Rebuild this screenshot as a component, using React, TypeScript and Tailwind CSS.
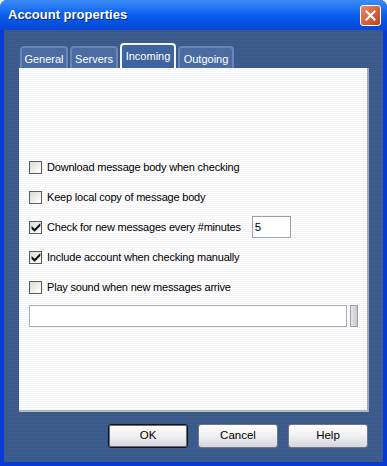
import React, { useState } from 'react';

const rows = [
  { label: 'Download message body when checking', checked: false },
  { label: 'Keep local copy of message body', checked: false },
  { label: 'Check for new messages every #minutes', checked: true, minutes: true },
  { label: 'Include account when checking manually', checked: true },
  { label: 'Play sound when new messages arrive', checked: false },
];

const tabs = [
  { name: 'General', w: 'w-[48px]' },
  { name: 'Servers', w: 'w-[48px]' },
  { name: 'Incoming', w: 'w-[56px]' },
  { name: 'Outgoing', w: 'w-[56px]' },
];

function CheckBox({ checked, onClick }: { checked: boolean; onClick: () => void }) {
  return (
    <button
      onClick={onClick}
      className="w-[13px] h-[13px] shrink-0 border border-[#5a5a5a] bg-gradient-to-br from-[#dcdcd7] to-[#ffffff] flex items-center justify-center p-0"
    >
      {checked && (
        <svg width="10" height="10" viewBox="0 0 9 9">
          <path d="M0.5 3.6 L3.3 6.1 L8.4 0.8 L8.4 3.6 L3.3 8.8 L0.5 6.3 Z" fill="#111" />
        </svg>
      )}
    </button>
  );
}

export default function App() {
  const [checks, setChecks] = useState(rows.map((r) => r.checked));
  const [minutes, setMinutes] = useState('5');
  const [tab, setTab] = useState('Incoming');

  return (
    <div className="w-[387px] h-[466px] flex flex-col bg-[#0a3ad6] rounded-t-[7px] overflow-hidden font-['Liberation_Sans',Arial,sans-serif]">
      <div className="h-[30px] shrink-0 flex items-center justify-between pl-[8px] pr-[6px] bg-gradient-to-b from-[#3b8cf7] via-[#0a5eec] to-[#0646d6]">
        <span className="text-white font-bold text-[13px] [text-shadow:1px_1px_0_#0a2a8a]">Account properties</span>
        <button className="w-[21px] h-[21px] rounded-[3px] border border-white bg-gradient-to-br from-[#e8876b] to-[#c2400f] flex items-center justify-center">
          <svg width="11" height="11" viewBox="0 0 11 11">
            <path d="M1.5 1.5 L9.5 9.5 M9.5 1.5 L1.5 9.5" stroke="#fff" strokeWidth="2.2" strokeLinecap="square" />
          </svg>
        </button>
      </div>

      <div className="flex-1 mx-[4px] mb-[4px] flex flex-col pt-[13px] pl-[15px] pr-[14px] bg-[repeating-linear-gradient(to_bottom,#3f5e90_0px,#3f5e90_1px,#395887_1px,#395887_2px)]">
        <div className="flex items-end h-[25px] gap-[2px] pl-[1px]">
          {tabs.map((t) =>
            t.name === tab ? (
              <button
                key={t.name}
                onClick={() => setTab(t.name)}
                className={`${t.w} h-[26px] -mb-[1px] rounded-t-[4px] border-2 border-b-0 border-[#f4f4f8] bg-[#3f63a0] text-white text-[11px] flex items-start justify-center pt-[3px]`}
              >
                {t.name}
              </button>
            ) : (
              <button
                key={t.name}
                onClick={() => setTab(t.name)}
                className={`${t.w} h-[22px] rounded-t-[4px] border-2 border-b-0 border-[#6a86b4] bg-[#4a6ca3] text-white text-[11px] flex items-center justify-center pt-[3px]`}
              >
                {t.name}
              </button>
            )
          )}
        </div>

        <div className="h-[344px] flex flex-col pl-[10px] pt-[84px] border-r-2 border-b-2 border-r-[#a6a8b8] border-b-[#b4b6c4] bg-[repeating-linear-gradient(to_bottom,#ffffff_0px,#ffffff_1px,#f5f5f9_1px,#f5f5f9_2px)]">
          {rows.map((r, i) => (
            <div key={r.label} className="h-[30px] flex items-center gap-[5px] text-[11px] tracking-[-0.2px] text-black">
              <CheckBox
                checked={checks[i]}
                onClick={() => setChecks(checks.map((c, j) => (j === i ? !c : c)))}
              />
              <span>{r.label}</span>
              {r.minutes && (
                <input
                  value={minutes}
                  onChange={(e) => setMinutes(e.target.value)}
                  className="ml-[6px] w-[39px] h-[22px] border border-[#9aa1a9] bg-white px-[2px] text-[11.5px] outline-none"
                />
              )}
            </div>
          ))}
          <div className="flex items-stretch gap-[3px] mt-[3px] h-[22px]">
            <input className="w-[318px] border border-[#a8adb3] bg-white outline-none" />
            <div className="w-[8px] border border-[#9aa0a6] bg-gradient-to-r from-[#e6e6ea] to-[#c8c8ce]" />
          </div>
        </div>

        <div className="flex justify-end gap-[10px] mt-[12px] pr-[1px]">
          {['OK', 'Cancel', 'Help'].map((b) => (
            <button
              key={b}
              className={`w-[80px] h-[24px] rounded-[3px] border text-[11.5px] text-black bg-gradient-to-b from-[#ffffff] via-[#f0eff2] to-[#d6d5dc] ${
                b === 'OK' ? 'border-[#101418] shadow-[inset_0_0_0_1px_#6b6e76]' : 'border-[#6b7688]'
              }`}
            >
              {b}
            </button>
          ))}
        </div>
      </div>
    </div>
  );
}
